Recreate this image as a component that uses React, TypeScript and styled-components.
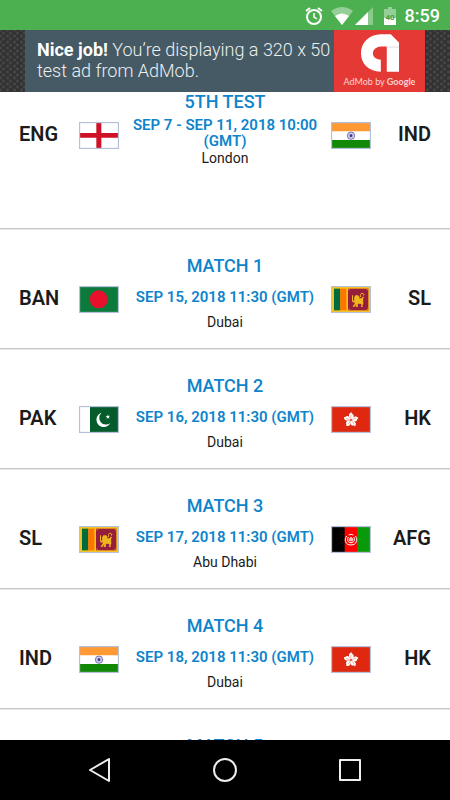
import React from "react";
import styled, { createGlobalStyle } from "styled-components";

const Global = createGlobalStyle`
  * { box-sizing: border-box; }
  body { margin: 0; background: #fff; font-family: Roboto, "Liberation Sans", sans-serif; color: #1b1b1b; }
`;

const Screen = styled.div`
  display: flex;
  flex-direction: column;
  height: 100vh;
  overflow: hidden;
`;

const StatusBar = styled.header`
  display: flex;
  flex: none;
  align-items: center;
  justify-content: flex-end;
  height: 30px;
  padding: 2px 10px 0 0;
  background: #4caf50;
  color: #fff;
  svg { display: block; }
`;

const StatusIcons = styled.div`
  display: flex;
  align-items: center;
  margin-right: 9px;
`;

const Clock = styled.time`
  font-size: 18px;
  line-height: 28px;
  font-weight: 500;
`;

const Gap = styled.span<{ $w: number }>`
  width: ${(p) => p.$w}px;
`;

const AdStrip = styled.aside`
  display: flex;
  flex: none;
  justify-content: center;
  height: 62px;
  background-color: #323232;
  background-image: radial-gradient(circle, #464646 1px, transparent 2px), radial-gradient(circle, #464646 1px, transparent 2px);
  background-size: 7px 6px;
  background-position: 0 0, 4px 3px;
`;

const Ad = styled.a`
  display: flex;
  width: 400px;
  background: #455a64;
  color: #eceff1;
  text-decoration: none;
`;

const AdText = styled.p`
  flex: 1;
  margin: 0;
  padding: 9px 0 0 12px;
  font-size: 18px;
  line-height: 21px;
  font-weight: 300;
  white-space: nowrap;
  strong { font-weight: 700; color: #fff; }
`;

const AdBrand = styled.div`
  display: flex;
  flex-direction: column;
  align-items: center;
  width: 91px;
  padding-top: 4px;
  background: #e53935;
  font-family: Lato, sans-serif;
  font-size: 9px;
  line-height: 14px;
  color: #fbd3d2;
  white-space: nowrap;
  svg { display: block; margin-bottom: 3px; }
  b { font-weight: 700; }
`;

const Fixtures = styled.ul`
  flex: 1;
  min-height: 0;
  margin: 0;
  padding: 0;
  list-style: none;
  overflow: hidden;
`;

const Fixture = styled.li<{ $first?: boolean }>`
  display: grid;
  grid-template-columns: 60px 40px 1fr 40px 60px;
  align-items: start;
  min-height: ${(p) => (p.$first ? 138 : 120)}px;
  padding: ${(p) => (p.$first ? 0 : 26)}px 19px 18px;
  border-bottom: 1px solid #e8e8e8;
  box-shadow: inset 0 -1px #c8c8c8;
`;

const Team = styled.span<{ $away?: boolean }>`
  padding-top: 30px;
  font-size: 20px;
  line-height: 24px;
  font-weight: 600;
  text-align: ${(p) => (p.$away ? "right" : "left")};
`;

const FlagBox = styled.svg`
  display: block;
  width: 40px;
  height: 27px;
  margin-top: 30px;
`;

const Info = styled.div<{ $tight?: boolean }>`
  display: grid;
  row-gap: ${(p) => (p.$tight ? 5 : 13)}px;
  text-align: center;
`;

const Title = styled.h2`
  margin: 0;
  font-size: 18px;
  line-height: 20px;
  font-weight: 500;
  color: #0d84cb;
`;

const When = styled.div`
  font-size: 15px;
  line-height: 16px;
  font-weight: 600;
  color: #0d84cb;
`;

const Venue = styled.div`
  margin-top: -4px;
  font-size: 14px;
  line-height: 16px;
`;

const NavBar = styled.nav`
  display: flex;
  flex: none;
  align-items: center;
  justify-content: center;
  gap: 77px;
  height: 60px;
  background: #000;
`;

const NavButton = styled.button`
  display: grid;
  place-items: center;
  width: 48px;
  height: 48px;
  padding: 0;
  border: 0;
  background: none;
  color: #eee;
`;

type Code = "ENG" | "IND" | "BAN" | "SL" | "PAK" | "HK" | "AFG";

const Spokes = () => (
  <g stroke="#3b3b98" strokeWidth="1">
    {[0, 30, 60, 90, 120, 150].map((a) => (
      <path key={a} d="M-11 0H11" transform={`rotate(${a})`} />
    ))}
  </g>
);

const art: Record<Code, React.ReactNode> = {
  ENG: (
    <>
      <rect width="120" height="81" fill="#fff" />
      <path d="M52 0h15v81H52zM0 33h120v14H0z" fill="#ce1124" />
    </>
  ),
  IND: (
    <>
      <rect width="120" height="81" fill="#fff" />
      <path d="M0 0h120v28H0z" fill="#ff9933" />
      <path d="M0 54h120v27H0z" fill="#128807" />
      <g transform="translate(60 41)">
        <circle r="11" fill="none" stroke="#3b3b98" strokeWidth="2" />
        <Spokes />
        <circle r="4" fill="#3b3b98" />
      </g>
    </>
  ),
  BAN: (
    <>
      <rect width="120" height="81" fill="#0b7a3b" />
      <circle cx="59" cy="40" r="27" fill="#e8112d" />
    </>
  ),
  SL: (
    <>
      <rect width="120" height="81" fill="#ffc20e" />
      <path d="M9 8h19v65H9z" fill="#006b3c" />
      <path d="M28 8h18v65H28z" fill="#ff7300" />
      <path d="M51 8h61v65H51z" fill="#941e3c" />
      <path d="M53 10h4l-4 4zM110 10h-4l4 4zM53 71h4l-4-4zM110 71h-4l4-4z" fill="#ffc20e" />
      <path
        d="M63 45v-16l3-3v18l4-1-1-8 4-7 8 0 5 5-2 4 8 0 3-5 5 1-3 3-1 8 1 8-3 7 2 4h-6l1-9-10-1-1 10h-6l2-9-5 8h-7l7-9-1-6-4 3z"
        fill="#efb61e"
      />
      <path d="M89 33c-2-6 0-11 4-11s8 4 4 7" fill="none" stroke="#efb61e" strokeWidth="3" />
    </>
  ),
  PAK: (
    <>
      <rect width="120" height="81" fill="#fff" />
      <path d="M33 0h87v81H33z" fill="#045b2b" />
      <path d="M68 20a22 22 0 1 0 26 31a19 19 0 1 1-26-31z" fill="#fff" />
      <path d="M87 25l1 5 6-1-5 4 3 5-5-3-4 4 1-6-5-2 6-1z" fill="#fff" />
    </>
  ),
  HK: (
    <>
      <rect width="120" height="81" fill="#de2910" />
      <g transform="translate(60 42)">
        {[0, 72, 144, 216, 288].map((a) => (
          <g key={a} transform={`rotate(${a})`}>
            <path d="M0-2C-8-8-9-20 2-23C0-18 10-18 8-10C7-5 3-4 0-2z" fill="#fff" />
            <path d="M1-5C-2-9-1-13 1-15" fill="none" stroke="#de2910" />
          </g>
        ))}
      </g>
    </>
  ),
  AFG: (
    <>
      <rect width="120" height="81" fill="#f00" />
      <path d="M0 0h41v81H0z" fill="#000" />
      <path d="M79 0h41v81H79z" fill="#099a0b" />
      <g fill="none" stroke="#fff" strokeWidth="3">
        <path d="M47 30c-9 10-4 27 13 27s22-17 13-27M52 33c-5 9-1 17 8 17s13-8 8-17" />
        <path d="M53 27q7-4 14 0" />
        <path d="M55 44h10v-6l-5-4-5 4z" fill="#ffb3b3" strokeWidth="2" />
      </g>
    </>
  ),
};

const Flag = ({ code }: { code: Code }) => (
  <FlagBox viewBox="0 0 120 81" role="img" aria-label={`${code} flag`}>
    {art[code]}
    <rect x="1" y="1" width="118" height="79" fill="none" stroke="#b4bfd8" strokeWidth="5" />
  </FlagBox>
);

type Match = { title: string; when?: string; venue?: string; home?: Code; away?: Code };

const matches: Match[] = [
  { title: "5TH TEST", when: "SEP 7 - SEP 11, 2018 10:00 (GMT)", venue: "London", home: "ENG", away: "IND" },
  { title: "MATCH 1", when: "SEP 15, 2018 11:30 (GMT)", venue: "Dubai", home: "BAN", away: "SL" },
  { title: "MATCH 2", when: "SEP 16, 2018 11:30 (GMT)", venue: "Dubai", home: "PAK", away: "HK" },
  { title: "MATCH 3", when: "SEP 17, 2018 11:30 (GMT)", venue: "Abu Dhabi", home: "SL", away: "AFG" },
  { title: "MATCH 4", when: "SEP 18, 2018 11:30 (GMT)", venue: "Dubai", home: "IND", away: "HK" },
  { title: "MATCH 5" },
];

const Side = ({ code, away }: { code?: Code; away?: boolean }) => {
  const name = <Team $away={away}>{code}</Team>;
  const flag = code ? <Flag code={code} /> : <span />;
  return away ? <>{flag}{name}</> : <>{name}{flag}</>;
};

export default function App() {
  return (
    <Screen>
      <Global />
      <StatusBar>
        <StatusIcons>
          <svg width="18" height="18" viewBox="0 0 18 18" fill="none" stroke="#fff" strokeWidth="2">
            <circle cx="9" cy="10" r="7" />
            <path d="M1 4l4-3M17 4l-4-3" />
            <path d="M9 6v4l3 2" strokeWidth="1.5" />
          </svg>
          <Gap $w={8} />
          <svg width="22" height="18" viewBox="0 0 22 18" fill="#fff">
            <path d="M11 18L0 4Q11-4 22 4z" opacity=".4" />
            <path d="M11 18L4 9Q11 4 18 9z" />
          </svg>
          <Gap $w={2} />
          <svg width="18" height="18" viewBox="0 0 18 18" fill="#fff">
            <path d="M18 0v18H0z" opacity=".35" />
            <path d="M13 5v13H0z" />
          </svg>
          <Gap $w={11} />
          <svg width="12" height="18" viewBox="0 0 12 18" fill="#fff">
            <path d="M4 0h4v2h4v16H0V2h4z" opacity=".4" />
            <path d="M0 11h12v7H0z" />
            <text x="6" y="13" textAnchor="middle" fontSize="8" fontWeight="700" fill="#43a047">40</text>
          </svg>
        </StatusIcons>
        <Clock>8:59</Clock>
      </StatusBar>

      <AdStrip>
        <Ad href="#ad">
          <AdText>
            <strong>Nice job!</strong> You’re displaying a 320 x 50
            <br />
            test ad from AdMob.
          </AdText>
          <AdBrand>
            <svg width="38" height="38" viewBox="405 25 115 113">
              <path
                fill="#fff"
                d="M465 138C425 136 405 112 405 82C405 50 430 25 465 25H495L520 50V138H483V62H465C450 64 441 72 441 82C441 93 450 100 465 102z"
              />
              <path d="M483 62H520V65H483V62z" fill="#ddd" />
            </svg>
            <span>AdMob by <b>Google</b></span>
          </AdBrand>
        </Ad>
      </AdStrip>

      <Fixtures>
        {matches.map((m, i) => (
          <Fixture key={m.title} $first={i === 0}>
            <Side code={m.home} />
            <Info $tight={i === 0}>
              <Title>{m.title}</Title>
              {m.when && <When>{m.when}</When>}
              {m.venue && <Venue>{m.venue}</Venue>}
            </Info>
            <Side code={m.away} away />
          </Fixture>
        ))}
      </Fixtures>

      <NavBar>
        <NavButton aria-label="Back">
          <svg width="24" height="24" viewBox="0 0 24 24" fill="none" stroke="currentColor" strokeWidth="2" strokeLinejoin="round">
            <path d="M21 1v22L2 12z" />
          </svg>
        </NavButton>
        <NavButton aria-label="Home">
          <svg width="24" height="24" viewBox="0 0 24 24" fill="none" stroke="currentColor" strokeWidth="2">
            <circle cx="12" cy="12" r="11" />
          </svg>
        </NavButton>
        <NavButton aria-label="Recent apps">
          <svg width="24" height="24" viewBox="0 0 24 24" fill="none" stroke="currentColor" strokeWidth="2" strokeLinejoin="round">
            <rect x="2" y="2" width="20" height="20" />
          </svg>
        </NavButton>
      </NavBar>
    </Screen>
  );
}
